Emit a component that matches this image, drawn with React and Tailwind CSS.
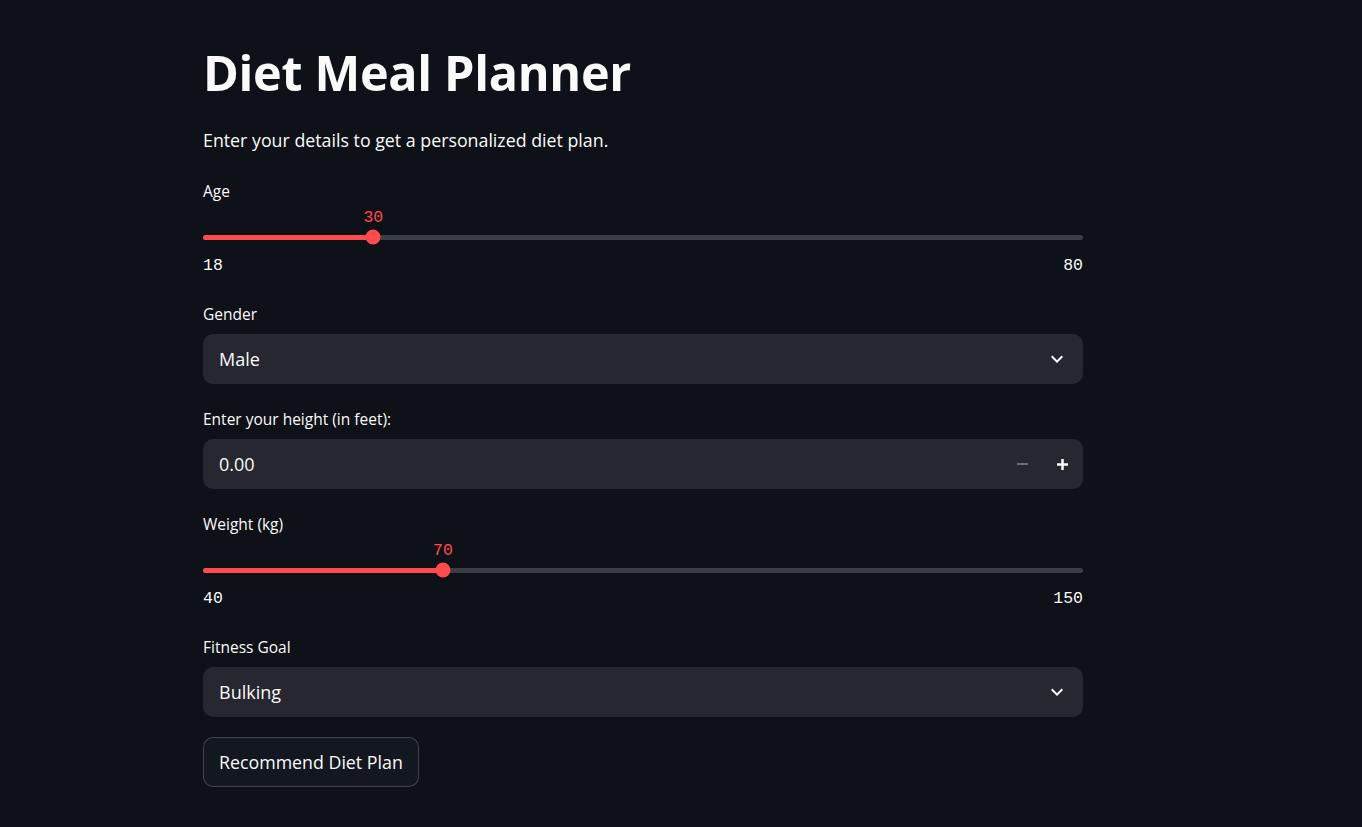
import { useState } from 'react'

const SANS = { fontFamily: '"Open Sans", "Noto Sans", sans-serif' }

function Label({ children, className = '' }) {
  return (
    <div className={`h-[22px] leading-[22px] text-[15.5px] text-[#fafafa] ${className}`}>{children}</div>
  )
}

function Chevron() {
  return (
    <svg width="24" height="24" viewBox="0 0 24 24" className="text-[#fafafa]">
      <path fill="currentColor" d="M7.41 8.59L12 13.17l4.59-4.58L18 10l-6 6-6-6 1.41-1.41z" />
    </svg>
  )
}

function Slider({ label, min, max, value }) {
  const pct = ((value - min) / (max - min)) * 100
  return (
    <div>
      <Label>{label}</Label>
      <div className="font-['Liberation_Mono',monospace] text-[16.5px]">
        <div className="relative h-[20px] mt-[4px]">
          <span
            className="absolute top-[2px] leading-[20px] text-[#ff4b4b] -translate-x-1/2"
            style={{ left: `${pct}%` }}
          >
            {value}
          </span>
        </div>
        <div className="relative h-[22px] flex items-center">
          <div className="w-full h-[5px] rounded-full bg-[#3b3d45]">
            <div className="h-full rounded-full bg-[#ff4b4b]" style={{ width: `${pct}%` }} />
          </div>
          <div
            className="absolute top-1/2 w-[15px] h-[15px] rounded-full bg-[#ff4b4b] -translate-x-1/2 -translate-y-1/2"
            style={{ left: `${pct}%` }}
          />
        </div>
        <div className="flex justify-between h-[20px] leading-[20px] mt-[6px] pt-[2px] text-[#fafafa]">
          <span>{min}</span>
          <span>{max}</span>
        </div>
      </div>
    </div>
  )
}

function Select({ label, value }) {
  return (
    <div>
      <Label>{label}</Label>
      <div className="mt-[9px] h-[50px] rounded-[10px] bg-[#262730] flex items-center justify-between pl-4 pr-[14px]">
        <span className="text-[18px] text-[#fafafa]">{value}</span>
        <Chevron />
      </div>
    </div>
  )
}

function NumberInput({ label, value }) {
  return (
    <div>
      <Label>{label}</Label>
      <div className="mt-[9px] h-[50px] rounded-[10px] bg-[#262730] flex items-center">
        <span className="flex-1 pl-4 text-[18px] text-[#fafafa]">{value}</span>
        <button type="button" className="w-10 h-full flex items-center justify-center">
          <span className="block w-[11px] h-[2px] bg-[#6b6d76]" />
        </button>
        <button type="button" className="w-10 h-full flex items-center justify-center mr-[1px]">
          <svg width="11" height="11" viewBox="0 0 11 11">
            <path d="M5.5 0v11M0 5.5h11" stroke="#fafafa" strokeWidth="2.5" />
          </svg>
        </button>
      </div>
    </div>
  )
}

export default function App() {
  const [age] = useState(30)
  const [weight] = useState(70)

  return (
    <div className="min-h-screen bg-[#0e1117]" style={SANS}>
      <main className="w-[880px] ml-[203px] pt-[36px]">
        <h1 className="text-[48.5px] leading-[72px] font-bold text-[#fafafa] tracking-[-0.3px]">Diet Meal Planner</h1>
        <p className="mt-[17px] h-[30px] leading-[30px] text-[17.8px] text-[#fafafa]">
          Enter your details to get a personalized diet plan.
        </p>

        <div className="mt-[25px]">
          <Slider label="Age" min={18} max={80} value={age} />
        </div>

        <div className="mt-[29px]">
          <Select label="Gender" value="Male" />
        </div>

        <div className="mt-[24px]">
          <NumberInput label="Enter your height (in feet):" value="0.00" />
        </div>

        <div className="mt-[24px]">
          <Slider label="Weight (kg)" min={40} max={150} value={weight} />
        </div>

        <div className="mt-[29px]">
          <Select label="Fitness Goal" value="Bulking" />
        </div>

        <button
          type="button"
          className="mt-[20px] h-[50px] px-[15px] rounded-[10px] border border-[#fafafa33] bg-[#131720] text-[17.8px] text-[#fafafa]"
        >
          Recommend Diet Plan
        </button>
      </main>
    </div>
  )
}
